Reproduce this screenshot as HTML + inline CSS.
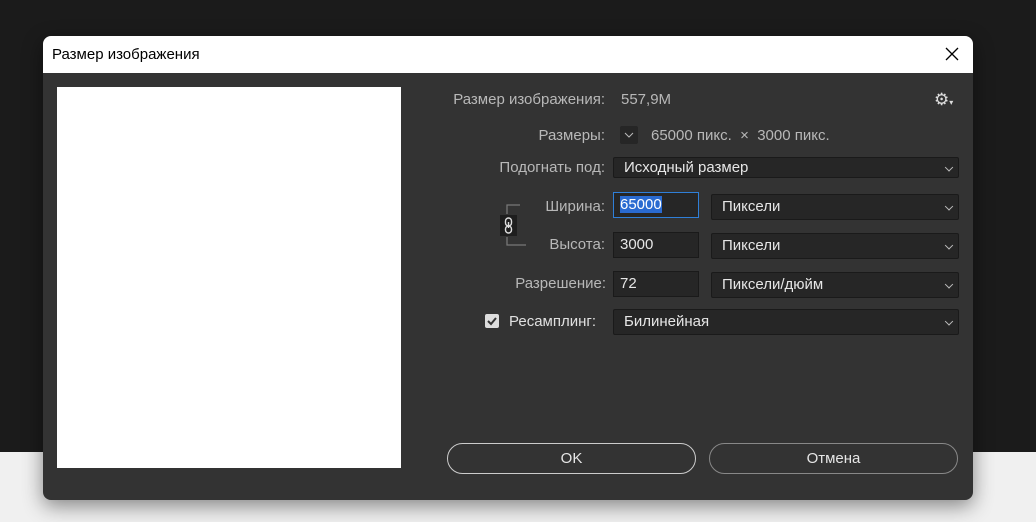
<!DOCTYPE html><html><head><style>
body{margin:0;width:1036px;height:522px;position:relative;overflow:hidden;font-family:"Liberation Sans",sans-serif;background:#f0f0f0}
.a{position:absolute}
.top{left:0;top:0;width:1036px;height:452px;background:#1b1b1b}
.dlg{left:43px;top:36px;width:930px;height:464px;background:#333;border-radius:8px;overflow:hidden;box-shadow:0 6px 20px rgba(0,0,0,.45)}
.tb{left:0;top:0;width:930px;height:37px;background:#fff;color:#000;font-size:15px}
.lbl{color:#b8b8b8;font-size:15px;text-align:right}
.f{background:#262626;border:1px solid #1a1a1a;color:#e6e6e6;font-size:15px;box-sizing:border-box;padding-left:10px;border-radius:2px}
.f:after{content:"";position:absolute;right:6px;top:50%;width:5px;height:5px;border-right:1px solid #bbb;border-bottom:1px solid #bbb;transform:translateY(-60%) rotate(45deg)}
.i{background:#262626;border:1px solid #1a1a1a;color:#e6e6e6;font-size:15px;box-sizing:border-box;padding-left:6px}
.btn{border:1px solid #aaa;border-radius:16px;color:#e6e6e6;font-size:15px;text-align:center;box-sizing:border-box;line-height:29px}
</style></head><body>
<div class="a top"></div>
<div class="a dlg">
 <div class="a tb"><span class="a" style="left:9px;top:10px">Размер изображения</span>
 <svg class="a" style="left:902px;top:11px" width="14" height="14"><path d="M1 1L13 13M13 1L1 13" stroke="#000" stroke-width="1.3"/></svg></div>
 <div class="a" style="left:14px;top:51px;width:344px;height:381px;background:#fff"></div>
 <div class="a lbl" style="left:370px;top:55px;width:192px">Размер изображения:</div>
 <div class="a" style="left:578px;top:55px;color:#b8b8b8;font-size:15px">557,9M</div>
 <div class="a" style="left:891px;top:54px;color:#ddd;font-size:17px">⚙<span style="font-size:8px">▾</span></div>
 <div class="a lbl" style="left:370px;top:91px;width:192px">Размеры:</div>
 <div class="a" style="left:577px;top:90px;width:18px;height:18px;background:#262626;border-radius:2px"><svg width="18" height="18"><path d="M5 7L9 11L13 7" stroke="#bbb" fill="none"/></svg></div>
 <div class="a" style="left:608px;top:91px;color:#b8b8b8;font-size:15px">65000 пикс. &nbsp;× &nbsp;3000 пикс.</div>
 <div class="a lbl" style="left:370px;top:123px;width:192px">Подогнать под:</div>
 <div class="a f" style="left:570px;top:121px;width:346px;height:21px;line-height:19px">Исходный размер</div>
 <div class="a lbl" style="left:440px;top:162px;width:122px">Ширина:</div>
 <div class="a i" style="left:570px;top:156px;width:86px;height:26px;line-height:24px;border:1px solid #2f7fd8"><span style="background:#2a6bd1;color:#fff">65000</span></div>
 <div class="a f" style="left:668px;top:158px;width:248px;height:26px;line-height:24px">Пиксели</div>
 <svg class="a" style="left:455px;top:165px" width="50" height="48"><path d="M9 13V4H22M9 36V44H28" stroke="#777" fill="none" stroke-width="1.3"/><rect x="2" y="14" width="17" height="21" fill="#1e1e1e"/><path d="M10.5 17a3 3 0 0 0-3 3v2a3 3 0 0 0 6 0v-2A3 3 0 0 0 10.5 17zM10.5 25a3 3 0 0 0-3 3v1a3 3 0 0 0 6 0v-1A3 3 0 0 0 10.5 25zM10.5 21v6" stroke="#ddd" fill="none" stroke-width="1.4"/></svg>
 <div class="a lbl" style="left:440px;top:200px;width:122px">Высота:</div>
 <div class="a i" style="left:570px;top:196px;width:86px;height:26px;line-height:24px">3000</div>
 <div class="a f" style="left:668px;top:197px;width:248px;height:26px;line-height:24px">Пиксели</div>
 <div class="a lbl" style="left:430px;top:239px;width:133px">Разрешение:</div>
 <div class="a i" style="left:570px;top:235px;width:86px;height:26px;line-height:24px">72</div>
 <div class="a f" style="left:668px;top:236px;width:248px;height:26px;line-height:24px">Пиксели/дюйм</div>
 <div class="a" style="left:442px;top:278px;width:14px;height:14px;background:#ddd;border-radius:2px"><svg width="14" height="14"><path d="M3 7L6 10L11 4" stroke="#333" stroke-width="2" fill="none"/></svg></div>
 <div class="a" style="left:466px;top:277px;color:#e0e0e0;font-size:15px">Ресамплинг:</div>
 <div class="a f" style="left:570px;top:273px;width:346px;height:26px;line-height:24px">Билинейная</div>
 <div class="a btn" style="left:404px;top:407px;width:249px;height:31px;border-color:#ccc">OK</div>
 <div class="a btn" style="left:666px;top:407px;width:249px;height:31px;border-color:#888">Отмена</div>
</div>
</body></html>
